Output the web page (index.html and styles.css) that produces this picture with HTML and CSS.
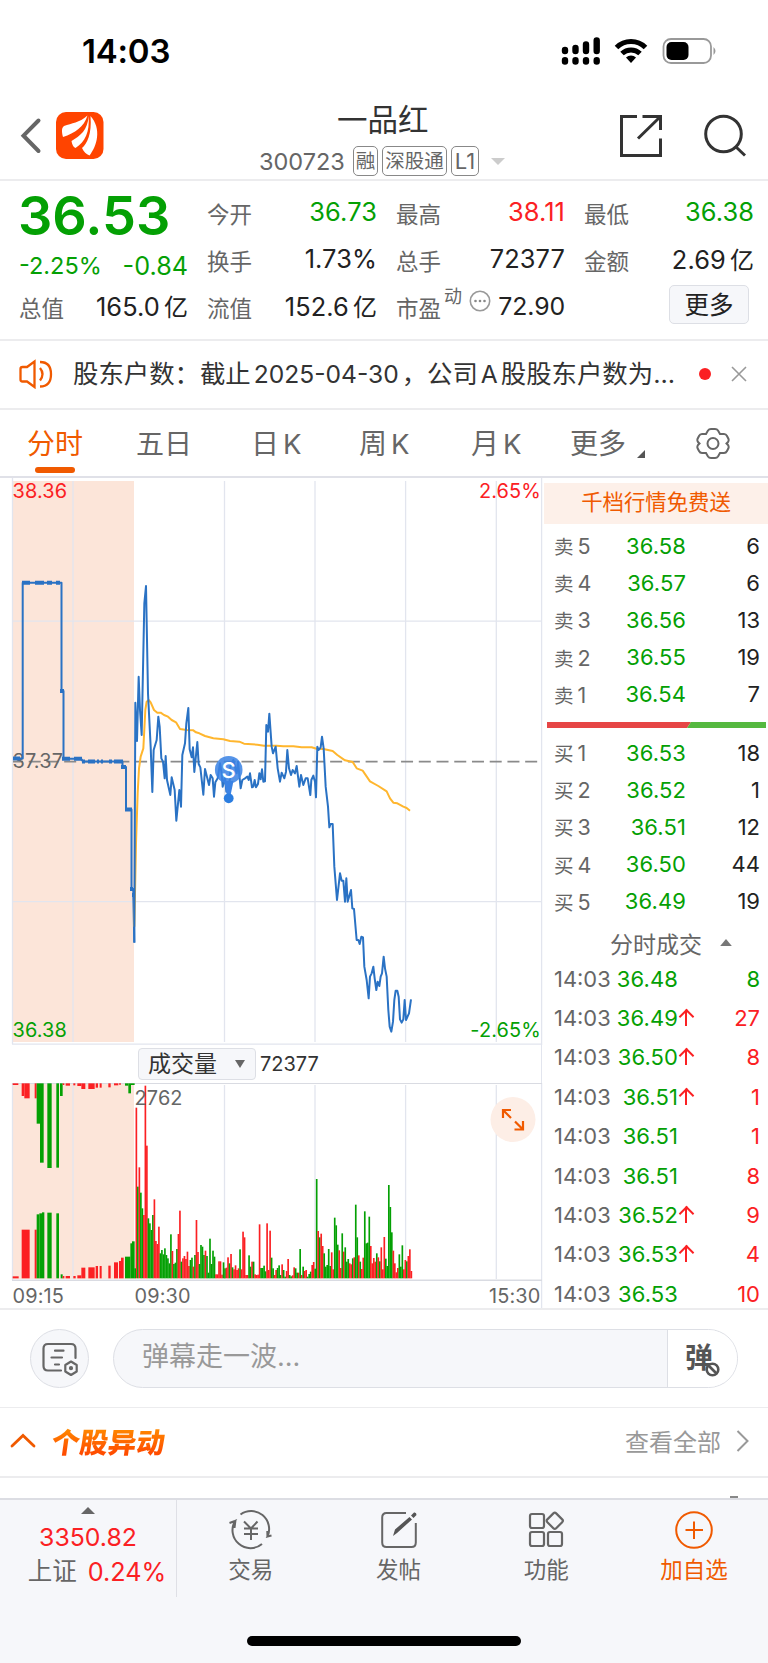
FILE: index.html
```html
<!DOCTYPE html>
<html lang="zh-CN">
<head>
<meta charset="utf-8">
<title>一品红 300723</title>
<link rel="stylesheet" href="styles.css">
</head>
<body>
<div class="status">
  <span class="clock">14:03</span>
  <svg width="160" height="34" viewBox="558 34 160 34">
    <g stroke="#000" stroke-width="6.4" stroke-linecap="round">
      <path d="M565 50v1M575.5 48v3M586 44.500v6.500M596.700 40.500v10.500M565 60.300v1.200M575.500 60.300v1.200M586 60.300v1.200M596.700 60.300v1.200"/>
    </g>
    <g fill="none" stroke="#000" stroke-width="5"><path d="M616.500 47.500a20.500 20.500 0 0 1 29 0M622 53.500a13 13 0 0 1 18 0"/></g>
    <path d="M631 63l-5-5.500a7.500 7.500 0 0 1 10 0z"/>
    <rect x="663.500" y="39" width="47.500" height="24" rx="7.500" fill="none" stroke="#999" stroke-width="1.800"/>
    <rect x="666.500" y="42" width="22" height="18" rx="5"/>
    <path d="M713.500 47q4 4 0 8z" fill="#999"/>
  </svg>
</div>
<header class="head">
  <div class="head-left">
    <svg width="86" height="50" viewBox="18 110 86 50">
      <path d="M38.500 120.500L23.500 135.700L38.500 151" fill="none" stroke="#666" stroke-width="4" stroke-linecap="round"/>
      <rect x="56" y="112" width="47.500" height="47" rx="10" fill="#ff4400"/>
      <path fill="#fff" d="M87.500 115.500C79 123 72 123 64 126C61 128 62 133 63 137C75 133 84 127 87.500 115.500zM88.500 116C88 130 80 136 71.500 141C72 144 73 147 75.500 148C85 142 90 132 88.500 116zM90.500 116C92 134 87 144 82 148C84 152 86 154 89.500 155.500C97 146 102 129 90.500 116z"/>
    </svg>
  </div>
  <div class="head-mid">
    <h1>一品红</h1>
    <div class="code"><span class="num">300723</span><i class="tag t1">融</i><i class="tag t2">深股通</i><i class="tag t3">L1</i><b class="down"></b></div>
  </div>
  <svg class="head-right" width="130" height="46" viewBox="618 113 130 46" fill="none" stroke="#333" stroke-width="3">
    <path d="M637 116.500H621.500V155.500H660.500V138.500M642.500 116.500H660.500V130M660.500 116.500L638 138.500"/>
    <circle cx="723.500" cy="134" r="17.800"/><path d="M735.500 146.500L745 155.500"/>
  </svg>
</header>
<section class="quote">
  <div class="q-main">
    <div class="price">36.53</div>
    <div class="pair green chg"><span>-2.25%</span><span class="diff">-0.84</span></div>
    <div class="pair"><label>总值</label><span>165.0<u>亿</u></span></div>
  </div>
  <div class="q-col"><div class="pair"><label>今开</label><span class="green">36.73</span></div><div class="pair"><label>换手</label><span>1.73%</span></div><div class="pair"><label>流值</label><span>152.6<u>亿</u></span></div></div>
  <div class="q-col"><div class="pair"><label>最高</label><span class="red">38.11</span></div><div class="pair"><label>总手</label><span>72377</span></div>
    <div class="pair"><label class="pe">市盈<sup>动</sup></label>
      <svg class="dots" width="22" height="24" viewBox="0 0 22 24"><circle cx="11" cy="11" r="9.700" fill="none" stroke="#999" stroke-width="1.600"/><g fill="#888"><circle cx="6.500" cy="11" r="1.300"/><circle cx="11" cy="11" r="1.300"/><circle cx="15.500" cy="11" r="1.300"/></g></svg><span class="ratio-value">72.90</span></div></div>
  <div class="q-col"><div class="pair"><label>最低</label><span class="green">36.38</span></div><div class="pair"><label>金额</label><span>2.69<u>亿</u></span></div><div class="more">更多</div></div>
</section>
<section class="news">
  <svg width="34" height="30" viewBox="19 358 34 30" fill="none" stroke="#f05a00" stroke-width="2.300"><path d="M34.500 360.500V386L27 380.500H22.500Q20.500 380.500 20.500 378.500V368Q20.500 366 22.500 366H27zM40 367Q45 373 40 379.500M40 361Q51 361 51 373.200Q51 385.500 40 385.500"/></svg>
  <p>股东户数：截止<em>2025-04-30</em>，公司<em>A</em>股股东户数为...</p>
  <i class="dot"></i>
  <svg width="16" height="16" viewBox="0 0 16 16" stroke="#999" stroke-width="1.600"><path d="M1 1L15 15M15 1L1 15"/></svg>
</section>
<nav class="tabs">
  <span class="on">分时</span><span>五日</span><span>日<em>K</em></span><span>周<em>K</em></span><span>月<em>K</em></span><span>更多</span>
  <svg class="corner" width="8" height="8" viewBox="0 0 8 8"><path d="M8 0V8H0z" fill="#555"/></svg>
  <svg width="34" height="34" viewBox="696 426 34 34" fill="none" stroke="#666" stroke-width="2"><path d="M708 430.500Q709 429 711 429H715Q717 429 718 430.500L720 434H724Q726 434 727 436L728.500 439Q729 440.500 728 442L726.500 443.500L728 445Q729 446.500 728.500 448L727 451Q726 453 724 453H720L718 456.500Q717 458 715 458H711Q709 458 708 456.500L706 453H702Q700 453 699 451L697.500 448Q697 446.500 698 445L699.500 443.500L698 442Q697 440.500 697.500 439L699 436Q700 434 702 434H706z"/><circle cx="713" cy="443.500" r="5.500"/></svg>
</nav>
<main class="board">
  <div class="charts">
    <svg class="block" width="543" height="567" viewBox="0 478 543 567">
      <rect x="13" y="481" width="121" height="561" fill="#fce5d9"/>
      <g class="grid"><path d="M12.500 478V1044M73 481V1042M224.500 481V1042M315 481V1042M405.600 481V1042M496.300 481V1042M541.600 478V1045M12 621.200H541M12 901.600H541M12 1044.200H542"/></g>
      <path d="M13 761.700H539" stroke="#8a8a8a" stroke-width="1.800" stroke-dasharray="12 5.730" stroke-dashoffset="2"/>
      <g class="lbl"><text x="12.500" y="498" fill="#fb2023">38.36</text><text x="12.500" y="767.500" fill="#666">37.37</text><text x="12.500" y="1037" fill="#04a004">36.38</text>
      <text x="541" y="498" fill="#fb2023" text-anchor="end">2.65%</text><text x="541" y="1037" fill="#04a004" text-anchor="end">-2.65%</text></g>
      <g fill="none" stroke="#2a72c4" stroke-linejoin="round">
        <path stroke-width="2" d="M13 758.500H22.700V582.700H61.500V691H63.500V758.700H81L83 761.500H122.500V767H126V809.500H131.500V889H133.300V895L134.300 942.500"/>
        <path stroke-width="4" d="M13 758.500H20M22 582.700H30M35 582.700H44M47 582.700H52M56 582.700H60M60 691H64M62 758.700H70M74 758.700H82M82 761.500H85M88 761.500H95M97 761.500H99M101 761.500H103M109 761.500H112M114 761.500H123M121 767H126M125 809.500H132M130 889H133M132 895H135"/>
      </g>
      <g transform="translate(120 560) scale(.33333)" fill="none" stroke-linejoin="round">
        <path stroke="#ffb62e" stroke-width="6" d="M43 1100L48 850L53 700L57 625L62 590L70 565L76 450L80 425L86 420L92 427L102 450L112 458L122 458L132 465L144 470L155 480L168 487L180 507L200 510L220 511L228 517L238 520L255 528L280 535L310 538L330 543L358 545L372 551L412 554L432 557L470 557L490 559L520 559L545 562L575 562L590 566L610 567L638 573L652 585L675 601L698 606L710 625L728 632L750 664L775 678L800 694L810 715L820 728L832 730L850 740L860 744L870 752"/>
        <path stroke="#2a72c4" stroke-width="6" d="M43 1148L46 428L51 543L56 350L60 450L65 525L73 130L78 78L84 400L92 560L97 696L101 570L110 540L115 470L119 500L124 595L129 605L134 655L137 588L141 660L151 705L155 652L164 690L169 782L178 690L183 740L187 585L195 550L199 490L205 444L209 568L215 592L219 562L223 636L232 546L236 612L241 622L250 704L255 627L262 655L267 675L272 645L278 655L282 710L286 667L293 655L300 610L305 640L308 680L315 650L319 695L323 680L327 700L331 620L340 600L350 640L354 605L362 685L367 660L375 655L382 650L386 660L390 640L396 682L400 680L404 660L408 682L414 672L418 640L422 658L426 628L430 665L435 664L439 495L444 515L448 461L455 560L459 580L467 560L473 625L480 665L485 638L493 655L498 635L502 570L507 625L513 645L518 630L525 640L530 618L538 680L543 645L550 675L557 655L563 655L571 705L574 660L580 647L585 665L588 712L592 560L596 570L602 562L606 530L611 565L617 680L624 740L628 802L632 792L638 792L643 920L651 1020L660 940L665 962L670 962L675 1025L679 955L683 1025L693 990L697 1045L702 1047L710 1140L715 1140L719 1152L724 1130L729 1132L733 1220L740 1260L746 1315L750 1250L755 1240L760 1220L764 1255L769 1290L773 1265L778 1278L782 1250L786 1240L791 1190L795 1225L800 1250L805 1350L809 1400L814 1415L819 1385L823 1320L827 1292L832 1292L836 1310L840 1378L845 1388L850 1378L854 1320L858 1380L867 1360L873 1318"/>
      </g>
      <circle cx="228.700" cy="769.700" r="13.800" fill="#3a82e4" fill-opacity=".86"/>
      <path d="M224 781H233.500L230 798H227.500z" fill="#3a82e4"/><circle cx="228.700" cy="798.300" r="4.900" fill="#2b7de0"/>
      <text class="mark" x="228.700" y="777.500" text-anchor="middle">S</text>
    </svg>
    <div class="vol-bar"><span class="select">成交量<svg width="10" height="8" viewBox="0 0 10 8"><path d="M0 0H10L5 8z" fill="#666"/></svg></span><span>72377</span></div>
    <svg class="block" width="543" height="226" viewBox="0 1083 543 226">
      <rect x="13" y="1083" width="121" height="196" fill="#fce5d9"/>
      <g class="grid"><path d="M12.500 1083V1280M73 1085V1279M224.500 1085V1279M315 1085V1279M405.600 1085V1279M496.300 1085V1279M541.600 1083V1309"/></g>
      <path d="M12 1083.300H542M12 1280.300H542" stroke="#d9dbe2" stroke-width="1.500"/>
      <g id="bars" transform="translate(0 1040) scale(.33333)"></g>
      <g class="lbl" fill="#666"><text x="134.500" y="1104.500">2762</text><text x="12.500" y="1303">09:15</text><text x="134.500" y="1303">09:30</text><text x="540.500" y="1303" text-anchor="end">15:30</text></g>
      <circle cx="513" cy="1119.500" r="22.500" fill="#fdeee6"/>
      <path d="M503 1118V1110H511M503.500 1110.500L511 1118M523 1121V1129.500H514.500M522.500 1129L515 1121.500" fill="none" stroke="#f05a00" stroke-width="2.200"/>
    </svg>
  </div>
  <aside class="book">
    <div class="promo">千档行情免费送</div>
    <ul class="levels">
      <li><label>卖<em>5</em></label><b>36.58</b><span>6</span></li><li><label>卖<em>4</em></label><b>36.57</b><span>6</span></li><li><label>卖<em>3</em></label><b>36.56</b><span>13</span></li><li><label>卖<em>2</em></label><b>36.55</b><span>19</span></li><li><label>卖<em>1</em></label><b>36.54</b><span>7</span></li>
    </ul>
    <svg class="ratio" width="220" height="6" viewBox="0 0 220 6"><path d="M0 0H144L140 6H0z" fill="#e64545"/><path d="M144 0H219V6H140z" fill="#55b83f"/></svg>
    <ul class="levels">
      <li><label>买<em>1</em></label><b>36.53</b><span>18</span></li><li><label>买<em>2</em></label><b>36.52</b><span>1</span></li><li><label>买<em>3</em></label><b>36.51</b><span>12</span></li><li><label>买<em>4</em></label><b>36.50</b><span>44</span></li><li><label>买<em>5</em></label><b>36.49</b><span>19</span></li>
    </ul>
    <div class="deal-title">分时成交<svg width="12" height="7" viewBox="0 0 10 6"><path d="M0 6H10L5 0z" fill="#777"/></svg></div>
    <ul class="deals">
      <li><label>14:03</label><b>36.48</b><i></i><span class="green">8</span></li>
      <li><label>14:03</label><b>36.49</b><i class="up"></i><span>27</span></li>
      <li><label>14:03</label><b>36.50</b><i class="up"></i><span>8</span></li>
      <li><label>14:03</label><b>36.51</b><i class="up"></i><span>1</span></li>
      <li><label>14:03</label><b>36.51</b><i></i><span>1</span></li>
      <li><label>14:03</label><b>36.51</b><i></i><span>8</span></li>
      <li><label>14:03</label><b>36.52</b><i class="up"></i><span>9</span></li>
      <li><label>14:03</label><b>36.53</b><i class="up"></i><span>4</span></li>
      <li><label>14:03</label><b>36.53</b><i></i><span>10</span></li>
    </ul>
  </aside>
</main>
<section class="chat">
  <div class="round"><svg width="38" height="36" viewBox="41 1341 38 36" fill="none" stroke="#666" stroke-width="2.200" stroke-linecap="round" stroke-linejoin="round"><path d="M61 1370.500H48Q43.500 1370.500 43.500 1366V1348.500Q43.500 1344 48 1344H71Q75.500 1344 75.500 1348.500V1358M55 1350.700H63.500M51.500 1357.500H62M55 1364.500H59"/><path d="M71 1361.500L76.700 1365V1371.500L71 1375L65.300 1371.500V1365z"/><circle cx="71" cy="1368.200" r="1" fill="#666"/></svg></div>
  <div class="pill"><span>弹幕走一波...</span><div class="danmu"><b>弹</b><svg width="15" height="15" viewBox="0 0 15 15"><circle cx="7.500" cy="7.500" r="5.800" fill="#fff" stroke="#555" stroke-width="2.600"/><path d="M3.500 3.500L11.500 11.500" stroke="#555" stroke-width="2.600"/></svg></div></div>
</section>
<section class="moves">
  <svg width="26" height="15" viewBox="0 0 26 15"><path d="M2 13L13 2.500L24 13" fill="none" stroke="#f05a00" stroke-width="2.800" stroke-linecap="round"/></svg>
  <h2>个股异动</h2><span>查看全部</span>
  <svg width="13" height="22" viewBox="0 0 13 22"><path d="M1.500 1L11.500 11L1.500 21" fill="none" stroke="#999" stroke-width="2"/></svg>
</section>
<div class="peek"><i></i></div>
<footer class="foot">
  <div class="index"><svg width="14" height="7" viewBox="0 0 14 7"><path d="M0 7H14L7 0z" fill="#666"/></svg><strong>3350.82</strong><div><span>上证</span><strong>0.24%</strong></div></div>
  <div class="item"><svg width="44" height="40" viewBox="229 1510 44 40" fill="none" stroke="#666" stroke-width="2"><path d="M240.500 1514.500A18 18 0 0 1 267.500 1536.500L271.500 1535.500M267.500 1538L267.300 1531M262 1544A18 18 0 0 1 235 1521L229.500 1523M235.500 1520L234.500 1528M244 1521.500L251 1528.500L257.500 1521.500M251 1528V1540M244 1528.500H258M244 1534H258"/></svg><span>交易</span></div>
  <div class="item"><svg width="40" height="40" viewBox="379 1510 40 40"><path d="M406 1513H386.500Q382.200 1513 382.200 1517.500V1542.500Q382.200 1547 386.500 1547H411.500Q415.800 1547 415.800 1542.500V1523" fill="none" stroke="#666" stroke-width="2"/><path fill="#555" d="M393 1536L395 1529.500L409.500 1517L412 1519.500L397 1533zM411 1515.500L414 1512.500Q416.500 1512 416.500 1515L413.500 1518z"/></svg><span>发帖</span></div>
  <div class="item"><svg width="40" height="40" viewBox="526.500 1510 40 40" fill="none" stroke="#666" stroke-width="2.200"><rect x="530.500" y="1514" width="14" height="14" rx="2"/><rect x="530.500" y="1532" width="14" height="14" rx="2"/><rect x="548.500" y="1532" width="14" height="14" rx="2"/><rect x="549" y="1514.500" width="12.500" height="12.500" rx="2" transform="rotate(45 555.200 1520.800)"/></svg><span>功能</span></div>
  <div class="item add"><svg width="40" height="40" viewBox="0 0 40 40" fill="none" stroke="#f05a00" stroke-width="2"><circle cx="20" cy="20" r="17.800"/><path d="M11.500 20H29M20 11.500V29"/></svg><span>加自选</span></div>
  <div class="home"></div>
</footer>
<script src="chart.js"></script>
</body>
</html>
```
FILE: styles.css
```css
* { box-sizing: border-box; margin: 0; padding: 0; }
body { width: 768px; height: 1663px; overflow: hidden; background: #fff; color: #222; font-family: Inter, "Noto Sans CJK SC", sans-serif; font-size: 23px; white-space: nowrap; }
svg { display: block; flex: none; }
ul { list-style: none; }
em, i, u { font-style: normal; text-decoration: none; }
.green { color: #04a004; }
.red { color: #fb2023; }
.status { height: 100px; padding: 34px 50px 0 82px; display: flex; justify-content: space-between; align-items: flex-start; }
.clock { font-size: 33px; font-weight: 600; line-height: 35px; letter-spacing: -.2px; color: #000; }
.head { height: 81px; border-bottom: 2px solid #ececee; display: grid; grid-template-columns: 242px 1fr 150px; }
.head-left { padding: 10px 0 0 18px; }
.head-right { margin-top: 13px; }
.head-mid { padding-top: 2px; }
.head h1 { font-size: 30.500px; font-weight: 400; line-height: 36px; color: #333; padding-left: 95px; }
.code { display: flex; align-items: center; height: 30px; margin-top: 8px; padding-left: 17px; color: #666; }
.code .num { width: 94px; font-size: 23.500px; }
.tag { height: 30px; border: 1.500px solid #888; border-radius: 5px; font-size: 19.500px; line-height: 28px; text-align: center; }
.t1 { width: 25px; }
.t2 { width: 65px; margin: 0 4px; }
.t3 { width: 28px; font-size: 22px; }
.down { margin-left: 12px; border: 7px solid transparent; border-top-color: #ccc; border-bottom: 0; }
.quote { height: 160px; border-bottom: 2px solid #ececee; padding: 8px 13px 0 19px; display: grid; grid-template-columns: 169px 170px 169px 170px; column-gap: 19px; }
.price { height: 53px; font-size: 54px; line-height: 54px; font-weight: 600; color: #04a004; margin-left: -1px; }
.pair { height: 47px; display: flex; justify-content: space-between; align-items: center; font-size: 25.400px; letter-spacing: .1px; }
.pair > span { position: relative; top: -1px; }
.pair label { font-size: 22.500px; color: #666; letter-spacing: 0; }
.pair u { margin-left: 4px; font-size: 24px; }
.q-main .pair.chg { height: 41px; font-size: 23.500px; letter-spacing: 0; padding-top: 8px; }
.pair .diff { font-size: 25.200px; margin-top: 1px; }
.pe { font-size: 23.500px; display: flex; }
.pe sup { font-size: 18px; line-height: 18px; margin: -3px 0 0 3px; }
.dots { margin: 0 0 10px -1px; }
.pair .ratio-value { font-size: 24.800px; letter-spacing: -.1px; }
.more { width: 80px; height: 39px; margin: 2px 0 0 85px; border: 1.500px solid #dddfe5; border-radius: 5px; background: #f6f7fa; text-align: center; font-size: 24.500px; line-height: 38px; }
.news { height: 69px; border-bottom: 2px solid #ececee; padding: 0 21px 2px 19px; display: flex; align-items: center; }
.news p { width: 626px; padding-left: 20px; font-size: 25.400px; color: #333; margin-top: -4px; }
.news p em { margin: 0 3px; font-size: 24.600px; }
.dot { width: 12px; height: 12px; border-radius: 6px; background: #fb2023; margin: 0 20px; }
.tabs { height: 68px; display: grid; grid-template-columns: 109px 115px 108px 112px 99px 67px 59px 34px; padding-left: 27px; align-items: center; font-size: 28px; color: #666; border-bottom: 2px solid #e0e1e8; }
.tabs span { height: 66px; line-height: 68px; }
.tabs em { margin-left: 4px; font-size: 27.500px; }
.tabs .on { color: #f05a00; position: relative; }
.tabs .on::after { content: ""; position: absolute; left: 8px; bottom: 3px; width: 40px; height: 6px; border-radius: 3px; background: #f05a00; }
.corner { margin-top: 22px; }
.board { height: 832px; display: grid; grid-template-columns: 543px 1fr; border-bottom: 2px solid #ececee; overflow: hidden; }
.block { display: block; }
.grid { fill: none; stroke: #e2e5ee; stroke-width: 1.300; }
.lbl { font: 19.900px Inter, sans-serif; letter-spacing: .15px; }
.mark { font: 500 22px Inter, sans-serif; fill: #fff; }
.vol-bar { height: 38px; border-right: 1.500px solid #e2e5ee; padding: 3px 0 0 138px; display: flex; gap: 4px; line-height: 32px; font-size: 20px; color: #333; margin-right: 1px; }
.select { width: 118px; height: 32px; border: 1.500px solid #dddfe5; border-radius: 4px; background: #f6f7fa; padding: 0 10px 0 9px; display: flex; align-items: center; justify-content: space-between; font-size: 23px; line-height: 28px; }
.promo { height: 41px; margin: 5px 0 3px 1px; background: #fdf0e9; color: #f05a00; font-size: 21.400px; line-height: 39px; text-align: center; }
.levels li { height: 37.200px; display: grid; grid-template-columns: 60px 72px 74px; padding-left: 11px; align-items: center; font-size: 22px; }
.levels label, .deals label { color: #666; }
.levels label { font-size: 19.500px; }
.levels em { font-size: 21.500px; margin-left: 4px; }
b { font-weight: 400; }
.levels b, .deals b { color: #04a004; text-align: right; letter-spacing: .1px; }
.levels span, .deals span { text-align: right; }
.ratio { margin: 9px 0 6px 4px; }
.deal-title { height: 40px; padding: 6px 0 0 67px; display: flex; align-items: center; gap: 18px; font-size: 23px; color: #666; }
.deals { margin-top: -1px; }
.deals li { height: 39.400px; display: grid; grid-template-columns: 57px 67px 16px 66px; padding-left: 11px; align-items: center; font-size: 22px; color: #fb2023; }
.deals label { font-size: 21.900px; }
.deals .green { color: #04a004; }
.up { width: 13px; height: 16px; margin-left: 1px; background: linear-gradient(#fb2023, #fb2023) 50% 0 / 2px 100% no-repeat; position: relative; }
.up::before { content: ""; position: absolute; left: 2px; top: 1px; width: 9px; height: 9px; border: solid #fb2023; border-width: 2px 0 0 2px; transform: rotate(45deg); }
.chat { height: 98px; border-bottom: 1.500px solid #ececee; padding: 19px 30px 0; display: flex; gap: 24px; }
.round { width: 59px; height: 59px; border: 1.500px solid #dddfe5; border-radius: 50%; background: #f6f7fa; display: grid; place-items: center; }
.pill { flex: 1; height: 59px; border: 1.500px solid #dddfe5; border-radius: 30px; background: #f6f7fa; overflow: hidden; display: flex; justify-content: space-between; padding-left: 28px; color: #999; font-size: 27px; line-height: 54px; }
.danmu { width: 70px; border-left: 1.500px solid #dddfe5; background: #fff; display: flex; padding-left: 17px; color: #555; line-height: 56px; }
.danmu b { font-size: 28px; font-weight: 700; }
.danmu svg { margin: 32px 0 0 -8px; }
.moves { height: 70px; border-bottom: 2px solid #ececee; padding: 0 19px 3px 10px; display: flex; align-items: center; }
.moves h2 { margin-left: 16px; flex: 1; font-size: 28.300px; font-weight: 900; transform: skewX(-8deg); transform-origin: 0 50%; background: linear-gradient(#ff8a00 20%, #ff4d00 80%); background-clip: text; -webkit-background-clip: text; color: transparent; }
.moves span { color: #999; font-size: 24px; margin-right: 15px; }
.peek { height: 20px; padding: 18px 30px 0 0; }
.peek i { display: block; width: 8px; height: 2px; margin-left: auto; background: #888; }
.foot { height: 166px; border-top: 2px solid #dcdde3; background: #f6f7fa; display: grid; grid-template-columns: 177px 1fr 1fr 1fr 1fr; grid-template-rows: 97px 1fr; color: #666; font-size: 22.500px; }
.index { border-right: 1.500px solid #dfe0e6; display: flex; flex-direction: column; align-items: center; padding-top: 7px; }
.index strong { font-weight: 400; font-size: 24.800px; color: #fb2023; line-height: 34px; margin-top: 6px; }
.index div { display: flex; gap: 11px; align-items: center; font-size: 24.500px; line-height: 35px; padding-left: 18px; width: 100%; justify-content: center; }
.index div strong { margin: 0; font-size: 25.200px; }
.item { display: flex; flex-direction: column; align-items: center; padding: 10px 0 0 0; }
.item span { line-height: 34px; margin-top: 3px; }
.item.add { color: #f05a00; }
.home { grid-column: 1 / -1; width: 274px; height: 10px; border-radius: 5px; background: #000; margin: 39px 0 0 247px; }
```
FILE: chart.js
```javascript
// Each entry is a colour letter (r = buy, g = sell) and the top of the bar.
const minutes = "r203 g440 r382 g458 g505 r525 r137 r317 g535 g550 g570 g525 r478 r603 r612 r560 g640 g630 g643 g625 g645 g655 g670 g583 r633 g672 g668 g627 r582 r512 g665 r655 r648 r657 r635 r678 g660 g653 r680 g645 r540 r636 g672 g615 g620 g645 r632 g648 g698 g596 g672 g632 g650 r703 r703 r664 r664 r704 g667 g685 r683 r652 g670 r642 g682 r688 r676 r690 r685 g628 r688 r575 r592 r705 r705 g646 g680 r665 g665 r703 r705 r704 r553 g684 g684 g677 g694 r550 r690 r572 g653 g685 r705 r690 g684 g676 g705 r673 g690 g710 r693 r657 g705 g709 r706 r682 g685 g698 r698 g627 r705 g680 r693 r690 g710 g702 g695 r675 r666 g686 g417 r573 g592 r581 r618 g640 g680 g675 g627 g678 r637 r688 g533 g556 g614 r631 r684 g580 r635 g622 g665 g657 r670 r673 g655 r652 g494 g592 r646 g665 r687 r653 g514 g610 g608 g530 r618 r670 r654 r665 g640 r652 g664 r622 r688 r591 g656 g678 g435 g501 g577 r632 r670 r697 r684 g643 g680 g616 r688 r660 g664 r648 r628 r693".split(" ");
const colors = { r: "#fb2023", g: "#04a004" };
const base = 715;
const group = document.getElementById("bars");

function bar(color, x, y, width, height) {
  const rect = document.createElementNS("http://www.w3.org/2000/svg", "rect");
  const attrs = { x, y, width, height, fill: colors[color] };
  for (const key in attrs) rect.setAttribute(key, attrs[key]);
  group.appendChild(rect);
}

const step = (1234 - 409) / (minutes.length - 1);
minutes.forEach((m, i) => {
  const top = Number(m.slice(1));
  bar(m[0], 406.6 + i * step, top, 5, base - top);
});

// Auction bars: colour, left, right, edge.
const lower = "r 38 56 709,r 65 89 569,r 104 110 569,g 110 118 523,g 118 126 520,g 126 133 517,g 142 155 518,g 169 177 520,g 182 188 703,r 188 193 708,r 197 210 708,r 220 227 708,r 232 244 706,r 244 256 683,r 265 284 682,r 287 294 678,r 299 305 678,r 325 332 677,r 342 354 667,r 357 363 663,r 363 371 653,g 375 391 650,g 391 396 610,g 396 404 604,g 403 408 685";
const upper = "r 38 55 135,r 65 73 168,r 73 89 175,r 104 110 175,g 110 120 251,g 120 131 368,g 142 155 384,g 169 177 383,g 180 188 168,r 188 193 135,r 197 210 137,r 220 226 136,r 232 244 138,r 244 256 147,r 265 284 147,r 287 294 143,r 299 305 143,r 325 332 142,r 342 355 136,r 357 363 134,g 375 385 137,g 385 393 160,g 393 404 135";
for (const row of lower.split(",")) {
  const [c, l, r, y] = row.split(" ");
  bar(c, +l, +y, r - l, base - y);
}
for (const row of upper.split(",")) {
  const [c, l, r, y] = row.split(" ");
  bar(c, +l, 130, r - l, y - 130);
}
```
